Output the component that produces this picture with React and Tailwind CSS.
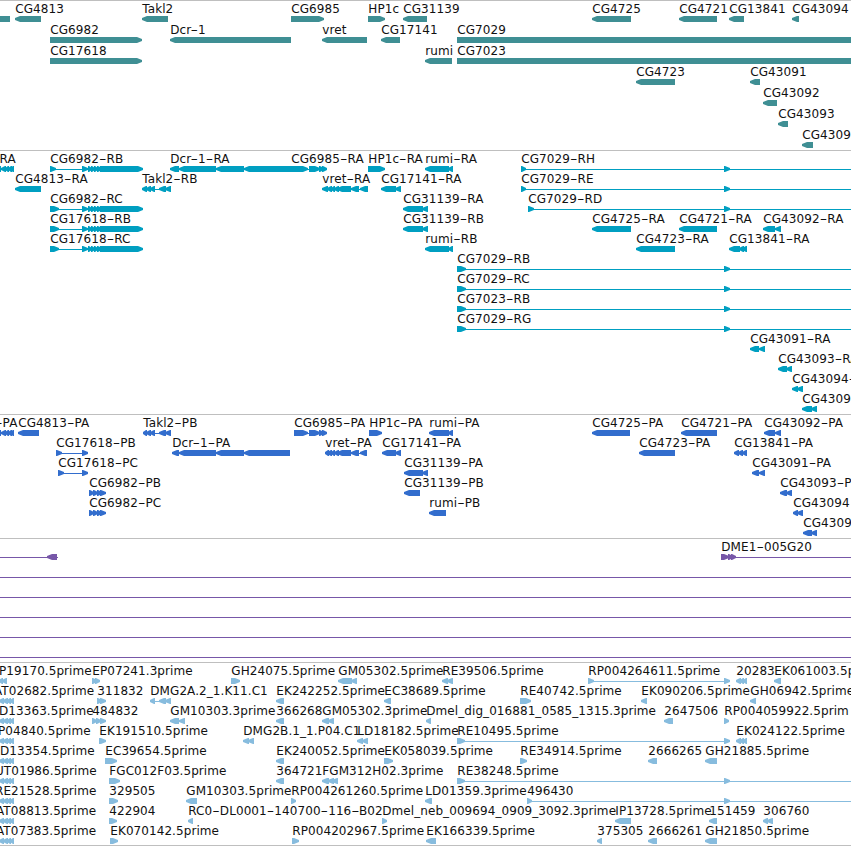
const END = 860;

// [row, label, direction, exons, { x: label start, to: end of the line }]
const genes = [
  [0, "", ">", [[-20, 10]], { flat: true }],
  [0, "CG4813", "<", [[15, 41]]],
  [0, "Takl2", "<", [[142, 168]]],
  [0, "CG6985", ">", [[291, 324]]],
  [0, "HP1c", ">", [[368, 385]]],
  [0, "CG31139", "<", [[403, 427]]],
  [0, "CG4725", "<", [[592, 631]]],
  [0, "CG4721", "<", [[679, 717]]],
  [0, "CG13841", "<", [[729, 744]]],
  [0, "CG43094", "<", [[792, 799]]],
  [1, "CG6982", ">", [[50, 142]]],
  [1, "Dcr-1", "<", [[170, 291]]],
  [1, "vret", "<", [[322, 367]]],
  [1, "CG17141", "<", [[381, 400]]],
  [1, "CG7029", ">", [[457, END]]],
  [2, "CG17618", ">", [[50, 142]]],
  [2, "rumi", "<", [[425, 452]]],
  [2, "CG7023", ">", [[457, END]]],
  [3, "CG4723", "<", [[636, 675]]],
  [3, "CG43091", "<", [[750, 760]]],
  [4, "CG43092", "<", [[763, 777]]],
  [5, "CG43093", "<", [[778, 788]]],
  [6, "CG4309", "<", [[802, 813]]],
];

const edge = [[-3, 1], [1, 6], [5, 9], [8, 12], [10, 14]];
const cgTail = [[82, 88], [88, 92], [91, 95], [94, 98], [97, 102], [100, 143]];
const vretMid = [[327, 332], [331, 335], [334, 339], [337, 351], [351, 359]];

const transcripts = [
  [0, "RA", "<", edge, { x: -0.5 }],
  [0, "CG6982-RB", ">", [[50, 56], ...cgTail]],
  [0, "Dcr-1-RA", "<", [[170, 179], [179, 216], [216, 244], [244, 291]]],
  [0, "CG6985-RA", ">", [[291, 308], [309, 320], [319, 324], [322, 327]]],
  [0, "HP1c-RA", ">", [[368, 385]]],
  [0, "rumi-RA", "<", [[425, 449], [448, 453]]],
  [0, "CG7029-RH", ">", [[521, 526], [724, 730]], { to: END }],
  [1, "CG4813-RA", "<", [[15, 41]]],
  [1, "Takl2-RB", "<", [[142, 147], [146, 151], [150, 155], [159, 166], [165, 171]]],
  [1, "vret-RA", "<", [[322, 328], ...vretMid, [360, 368]]],
  [1, "CG17141-RA", "<", [[381, 396], [395, 401]]],
  [1, "CG7029-RE", ">", [[521, 526], [724, 730]], { to: END }],
  [2, "CG6982-RC", ">", [[50, 59], ...cgTail]],
  [2, "CG31139-RA", "<", [[403, 423], [422, 428]]],
  [2, "CG7029-RD", ">", [[528, 534], [724, 730]], { to: END }],
  [3, "CG17618-RB", ">", [[50, 59], ...cgTail]],
  [3, "CG31139-RB", "<", [[403, 423], [422, 428]]],
  [3, "CG4725-RA", "<", [[592, 631]]],
  [3, "CG4721-RA", "<", [[679, 717]]],
  [3, "CG43092-RA", "<", [[763, 775], [775, 781]]],
  [4, "CG17618-RC", ">", [[50, 59], ...cgTail]],
  [4, "rumi-RB", "<", [[425, 449], [448, 453]]],
  [4, "CG4723-RA", "<", [[636, 675]]],
  [4, "CG13841-RA", "<", [[729, 740], [739, 744], [742, 747]]],
  [5, "CG7029-RB", ">", [[457, 466], [724, 730]], { to: END }],
  [6, "CG7029-RC", ">", [[457, 466], [724, 730]], { to: END }],
  [7, "CG7023-RB", ">", [[457, 466], [724, 730]], { to: END }],
  [8, "CG7029-RG", ">", [[457, 466], [724, 730]], { to: END }],
  [9, "CG43091-RA", "<", [[750, 759], [759, 765]]],
  [10, "CG43093-RA", "<", [[778, 787], [786, 792]]],
  [11, "CG43094-", "<", [[792, 798], [797, 803]]],
  [12, "CG4309", "<", [[802, 812], [811, 817]]],
];

const proteins = [
  [0, "-PA", "<", edge, { x: -5 }],
  [0, "CG4813-PA", "<", [[18, 39]]],
  [0, "Takl2-PB", "<", [[143, 147], [146, 151], [150, 155], [159, 166], [165, 171]]],
  [0, "CG6985-PA", ">", [[294, 308], [309, 320], [319, 324], [322, 327]]],
  [0, "HP1c-PA", ">", [[369, 382]]],
  [0, "rumi-PA", "<", [[429, 449], [448, 453]]],
  [0, "CG4725-PA", "<", [[592, 630]]],
  [0, "CG4721-PA", "<", [[681, 717]]],
  [0, "CG43092-PA", "<", [[764, 775], [775, 781]]],
  [1, "CG17618-PB", ">", [[56, 62], [82, 88]]],
  [1, "Dcr-1-PA", "<", [[172, 179], [179, 216], [216, 244], [244, 290]]],
  [1, "vret-PA", "<", [[325, 329], ...vretMid, [360, 367]]],
  [1, "CG17141-PA", "<", [[382, 396], [395, 401]]],
  [1, "CG4723-PA", "<", [[639, 675]]],
  [1, "CG13841-PA", "<", [[734, 739], [738, 743], [742, 747]]],
  [2, "CG17618-PC", ">", [[58, 64], [82, 88]]],
  [2, "CG31139-PA", "<", [[404, 423], [422, 428]]],
  [2, "CG43091-PA", "<", [[752, 759], [759, 765]]],
  [3, "CG6982-PB", ">", [[89, 94], [93, 98], [97, 102], [100, 106]]],
  [3, "CG31139-PB", "<", [[404, 420]]],
  [3, "CG43093-P", "<", [[780, 787], [786, 792]]],
  [4, "CG6982-PC", ">", [[89, 94], [93, 98], [97, 102], [100, 106]]],
  [4, "rumi-PB", "<", [[429, 446]]],
  [4, "CG43094", "<", [[793, 798], [797, 803]]],
  [5, "CG4309", "<", [[803, 812], [811, 817]]],
];

const insertions = [
  [0, "", "<", [[-20, -10], [47, 57]], { to: 58 }],
  [0, "DME1-005G20", ">", [[721, 729], [728, 733], [731, 736]], { to: END }],
  ...[1, 2, 3, 4, 5].map((row) => [row, "", ">", [[-20, -10]], { to: END }]),
];

const ends = [[-1, 4], [3, 8], [7, 11], [10, 14]];

const ests = [
  [0, "P19170.5prime", "<", [[-1, 3], [2, 7]], { x: -1 }],
  [0, "EP07241.3prime", ">", [[92, 97], [95, 100]]],
  [0, "GH24075.5prime", ">", [[231, 240]]],
  [0, "GM05302.5prime", "<", [[338, 352], [351, 357]]],
  [0, "RE39506.5prime", "<", [[442, 448], [447, 453]]],
  [0, "RP004264611.5prime", ">", [[588, 594], [724, 730]]],
  [0, "20283", "<", [[736, 741], [740, 744], [743, 747]]],
  [0, "EK061003.5p", "<", [[774, 781]]],
  [1, "AT02682.5prime", "<", ends, { x: -6 }],
  [1, "311832", ">", [[97, 102], [100, 106]]],
  [1, "DMG2A.2_1.K11.C1", "<", [[150, 155], [159, 166], [165, 171]]],
  [1, "EK242252.5prime", "<", [[276, 284]]],
  [1, "EC38689.5prime", "<", [[384, 391]]],
  [1, "RE40742.5prime", ">", [[520, 531]]],
  [1, "EK090206.5prime", "<", [[641, 647]]],
  [1, "GH06942.5prime", "<", [[750, 756]]],
  [2, "D13363.5prime", "<", ends, { x: -1 }],
  [2, "484832", ">", [[92, 97], [96, 101], [100, 106]]],
  [2, "GM10303.3prime", "<", [[170, 179], [179, 185]]],
  [2, "366268", "<", [[276, 284]]],
  [2, "GM05302.3prime", "<", [[322, 329], [328, 334]]],
  [2, "Dmel_dig_016881_0585_1315.3prime", "<", [[426, 431]]],
  [2, "2647506", "<", [[664, 673]]],
  [2, "RP004059922.5prim", ">", [[724, 729]]],
  [3, "P04840.5prime", "<", ends, { x: -2 }],
  [3, "EK191510.5prime", ">", [[99, 106]]],
  [3, "DMG2B.1_1.P04.C1", "<", [[243, 249], [248, 254]]],
  [3, "LD18182.5prime", "<", [[357, 363], [362, 368]]],
  [3, "RE10495.5prime", ">", [[457, 465], [724, 730]]],
  [3, "EK024122.5prime", "<", [[736, 741], [740, 744], [743, 747]]],
  [4, "D13354.5prime", "<", ends, { x: 0 }],
  [4, "EC39654.5prime", ">", [[105, 117]]],
  [4, "EK240052.5prime", "<", [[276, 284]]],
  [4, "EK058039.5prime", ">", [[384, 393]]],
  [4, "RE34914.5prime", ">", [[520, 527]]],
  [4, "2666265", "<", [[648, 657]]],
  [4, "GH21885.5prime", "<", [[705, 717]]],
  [5, "UT01986.5prime", "<", ends, { x: -5 }],
  [5, "FGC012F03.5prime", ">", [[109, 120]]],
  [5, "364721", "<", [[276, 284]]],
  [5, "FGM312H02.3prime", "<", [[322, 329], [328, 334], [332, 338]]],
  [5, "RE38248.5prime", ">", [[457, 465], [724, 730]], { to: END }],
  [6, "RE21528.5prime", "<", ends, { x: -5 }],
  [6, "329505", ">", [[109, 118]]],
  [6, "GM10303.5prime", "<", [[186, 197]]],
  [6, "RP004261260.5prime", ">", [[291, 296]]],
  [6, "LD01359.3prime", "<", [[425, 432]]],
  [6, "496430", ">", [[527, 532], [724, 730]], { to: END }],
  [7, "AT08813.5prime", "<", ends, { x: -4 }],
  [7, "422904", ">", [[109, 117]]],
  [7, "RC0-DL0001-140700-116-B02", "<", [[188, 193]]],
  [7, "Dmel_neb_009694_0909_3092.3prime", ">", [[382, 387]]],
  [7, "IP13728.5prime", "<", [[615, 631]]],
  [7, "151459", "<", [[709, 717]]],
  [7, "306760", "<", [[763, 768], [767, 773]]],
  [8, "AT07383.5prime", "<", ends, { x: -4 }],
  [8, "EK070142.5prime", ">", [[110, 118]]],
  [8, "RP004202967.5prime", ">", [[292, 299]]],
  [8, "EK166339.5prime", "<", [[426, 436]]],
  [8, "375305", "<", [[597, 602]]],
  [8, "2666261", "<", [[648, 657]]],
  [8, "GH21850.5prime", "<", [[705, 717]]],
];

function arrow([a, b], dir, flat) {
  if (flat) return `${a},0 ${b},0 ${b},6 ${a},6`;
  const head = Math.min(5, b - a - 1);
  if (dir === ">") {
    return `${a},0 ${b - head},0 ${b},2 ${b},4 ${b - head},6 ${a},6`;
  }
  return `${b},0 ${a + head},0 ${a},2 ${a},4 ${a + head},6 ${b},6`;
}

function Label({ text, x }) {
  return (
    <text x={x} y="-3" className="fill-[#111]">
      {text.split(/(-)/).map((part, i) =>
        part === "-" ? (
          <tspan key={i} textLength="7.6" lengthAdjust="spacingAndGlyphs">
            -
          </tspan>
        ) : (
          part
        )
      )}
    </text>
  );
}

function Feature({ y, label, dir, exons, x, to, flat }) {
  const start = exons[0][0];
  const end = to ?? exons[exons.length - 1][1];
  return (
    <g transform={`translate(0 ${y})`}>
      {(exons.length > 1 || to) && (
        <rect x={start} y="3" width={end - start} height="1" />
      )}
      {exons.map((exon, i) => (
        <polygon key={i} points={arrow(exon, dir, flat)} />
      ))}
      {label && <Label text={label} x={x ?? start + 0.3} />}
    </g>
  );
}

function Track({ features, step = 20, className }) {
  return (
    <section className={`border-t border-[#bfbfbf] ${className}`}>
      <svg className="block w-full h-full font-['DejaVu_Sans',sans-serif] text-[12px] tracking-[0.07px]">
        {features.map(([row, label, dir, exons, opts], i) => (
          <Feature
            key={i}
            y={15 + row * step}
            label={label}
            dir={dir}
            exons={exons}
            {...opts}
          />
        ))}
      </svg>
    </section>
  );
}

export default function App() {
  return (
    <main className="flex flex-col w-[851px] h-[846px] overflow-hidden bg-white border-b border-[#bfbfbf]">
      <Track features={genes} step={21} className="h-[150px] fill-[#3f8f94]" />
      <Track features={transcripts} className="h-[264px] fill-[#009fc1]" />
      <Track features={proteins} className="h-[124px] fill-[#326dcd]" />
      <Track features={insertions} className="h-[124px] fill-[#7757a8]" />
      <Track features={ests} className="h-[183px] fill-[#87bcde]" />
    </main>
  );
}
